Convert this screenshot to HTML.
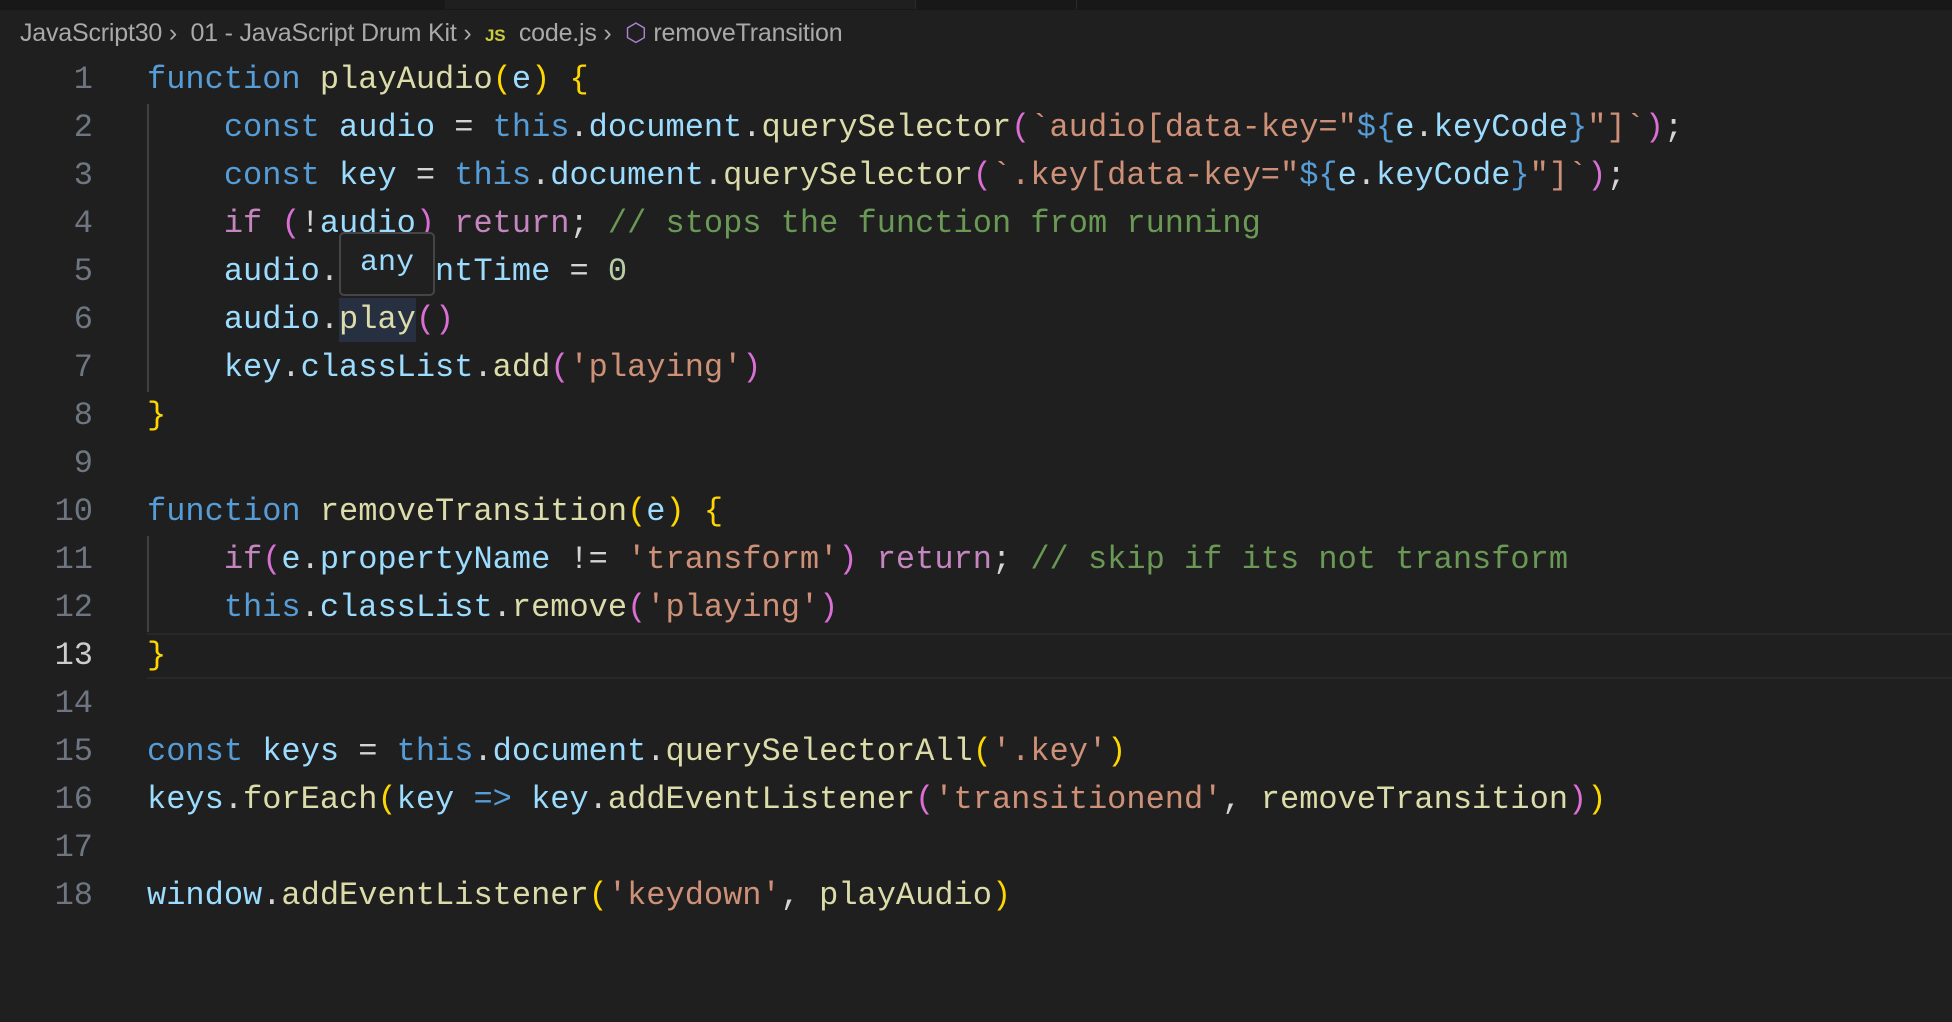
<!DOCTYPE html>
<html><head><meta charset="utf-8"><style>
html,body{margin:0;padding:0;background:#1f1f1f;width:1952px;height:1022px;overflow:hidden}
.tabs{position:absolute;left:0;top:0;width:1952px;height:10px;background:#181818}
.tab{position:absolute;top:0;height:9px;background:#1f1f1f}
.bc{position:absolute;left:20px;top:18px;font:25px "Liberation Sans",sans-serif;color:#a9a9a9;white-space:pre;letter-spacing:-0.2px}
.ln{position:absolute;width:80px;text-align:right;font:32px "Liberation Mono",monospace;color:#6e7681;line-height:48px}
.code{position:absolute;left:147px;font:32px "Liberation Mono",monospace;line-height:48px;white-space:pre;color:#d4d4d4}
.k{color:#569cd6}.c{color:#c586c0}.f{color:#dcdcaa}.v{color:#9cdcfe}.s{color:#ce9178}.m{color:#6a9955}.n{color:#b5cea8}.y{color:#ffd700}.p{color:#da70d6}.b{color:#179fff}
.guide{position:absolute;left:147px;width:2px;background:#404040}
</style></head><body>
<div class="tabs"><div class="tab" style="left:445px;width:470px"></div></div>
<div style="position:absolute;left:915px;top:0;width:1px;height:9px;background:#2b2b2b"></div>
<div style="position:absolute;left:1076px;top:0;width:1px;height:9px;background:#2b2b2b"></div>
<div class="bc">JavaScript30 ›  01 - JavaScript Drum Kit ›  <span style="color:#cbcb41;font-size:17px;font-weight:bold">JS</span>  code.js ›  <span style="color:#b180d7">⬡</span> removeTransition</div>
<div style="position:absolute;left:147px;top:633px;width:1805px;height:46px;border-top:2px solid #282828;border-bottom:2px solid #282828;box-sizing:border-box"></div>
<div class="guide" style="top:104px;height:288px"></div>
<div class="guide" style="top:536px;height:96px"></div>
<div style="position:absolute;left:339px;top:298px;width:77px;height:44px;background:#263040"></div>
<div class="code" style="top:56px"><span class="k">function</span> <span class="f">playAudio</span><span class="y">(</span><span class="v">e</span><span class="y">)</span> <span class="y">{</span>
    <span class="k">const</span> <span class="v">audio</span> = <span class="k">this</span>.<span class="v">document</span>.<span class="f">querySelector</span><span class="p">(</span><span class="s">`audio[data-key="</span><span class="k">${</span><span class="v">e</span>.<span class="v">keyCode</span><span class="k">}</span><span class="s">"]`</span><span class="p">)</span>;
    <span class="k">const</span> <span class="v">key</span> = <span class="k">this</span>.<span class="v">document</span>.<span class="f">querySelector</span><span class="p">(</span><span class="s">`.key[data-key="</span><span class="k">${</span><span class="v">e</span>.<span class="v">keyCode</span><span class="k">}</span><span class="s">"]`</span><span class="p">)</span>;
    <span class="c">if</span> <span class="p">(</span>!<span class="v">audio</span><span class="p">)</span> <span class="c">return</span>; <span class="m">// stops the function from running</span>
    <span class="v">audio</span>.<span class="v">currentTime</span> = <span class="n">0</span>
    <span class="v">audio</span>.<span class="f">play</span><span class="p">()</span>
    <span class="v">key</span>.<span class="v">classList</span>.<span class="f">add</span><span class="p">(</span><span class="s">'playing'</span><span class="p">)</span>
<span class="y">}</span>

<span class="k">function</span> <span class="f">removeTransition</span><span class="y">(</span><span class="v">e</span><span class="y">)</span> <span class="y">{</span>
    <span class="c">if</span><span class="p">(</span><span class="v">e</span>.<span class="v">propertyName</span> != <span class="s">'transform'</span><span class="p">)</span> <span class="c">return</span>; <span class="m">// skip if its not transform</span>
    <span class="k">this</span>.<span class="v">classList</span>.<span class="f">remove</span><span class="p">(</span><span class="s">'playing'</span><span class="p">)</span>
<span class="y">}</span>

<span class="k">const</span> <span class="v">keys</span> = <span class="k">this</span>.<span class="v">document</span>.<span class="f">querySelectorAll</span><span class="y">(</span><span class="s">'.key'</span><span class="y">)</span>
<span class="v">keys</span>.<span class="f">forEach</span><span class="y">(</span><span class="v">key</span> <span class="k">=&gt;</span> <span class="v">key</span>.<span class="f">addEventListener</span><span class="p">(</span><span class="s">'transitionend'</span>, <span class="f">removeTransition</span><span class="p">)</span><span class="y">)</span>

<span class="v">window</span>.<span class="f">addEventListener</span><span class="y">(</span><span class="s">'keydown'</span>, <span class="f">playAudio</span><span class="y">)</span></div>
<div class="ln" style="left:13px;top:56px">1<br>2<br>3<br>4<br>5<br>6<br>7<br>8<br>9<br>10<br>11<br>12<br><span style="color:#cccccc">13</span><br>14<br>15<br>16<br>17<br>18</div>
<div style="position:absolute;left:339px;top:232px;width:96px;height:64px;background:#202020;border:2px solid #454545;border-radius:5px;box-sizing:border-box;font:30px 'Liberation Mono',monospace;color:#9cdcfe;text-align:center;line-height:58px">any</div>
</body></html>
